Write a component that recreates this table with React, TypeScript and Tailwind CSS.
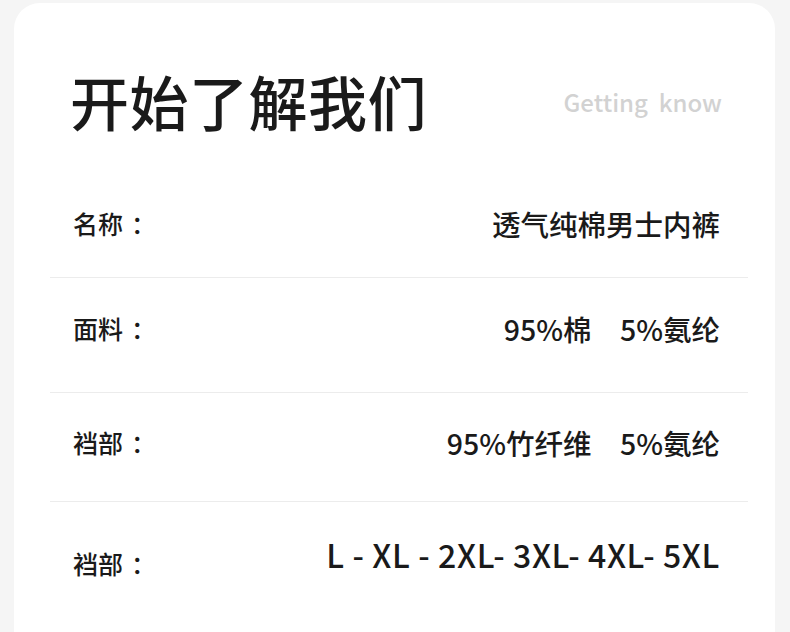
const font = { fontFamily: '"Noto Sans CJK SC", "Noto Sans", sans-serif' };

const rows = [
  { label: "名称", value: "透气纯棉男士内裤", h: "h-[143px]", pt: "pt-[71px]" },
  { label: "面料", value: "95%棉\u30005%氨纶", h: "h-[115px]", pt: "pt-[33px]" },
  { label: "裆部", value: "95%竹纤维\u30005%氨纶", h: "h-[109px]", pt: "pt-[32px]" },
];

function Label({ text }: { text: string }) {
  return (
    <span className="flex items-center text-[25px] font-medium">
      {text}
      <span className="ml-[8px]">：</span>
    </span>
  );
}

export default function App() {
  return (
    <div className="h-[632px] overflow-hidden bg-[#f5f5f5] pt-[3px] pl-[14px]" style={font}>
      <div className="w-[761px] min-h-[700px] rounded-[26px] bg-white pl-[36px] pr-[27px] pt-[62px] text-[#1a1a1a]">
        <div className="flex h-[70px] items-center justify-between pl-[20px] pr-[26px]">
          <h1 className="text-[59px] font-medium leading-none tracking-[0.5px]">开始了解我们</h1>
          <span className="mt-[4px] whitespace-pre text-[24px] font-medium text-[#d2d2d2]">Getting  know</span>
        </div>

        {rows.map((row) => (
          <div key={row.value} className={`${row.h} ${row.pt} border-b border-[#ececec] pl-[23px] pr-[28px]`}>
            <div className="flex h-[36px] items-center justify-between">
              <Label text={row.label} />
              <span className="text-[28.5px] font-medium">{row.value}</span>
            </div>
          </div>
        ))}

        <div className="flex items-start justify-between pl-[23px] pr-[28px] pt-[34px]">
          <div className="mt-[10px] flex h-[36px] items-center">
            <Label text="裆部" />
          </div>
          <span className="flex h-[36px] items-center text-[32px] font-medium tracking-[0.6px]">L - XL - 2XL- 3XL- 4XL- 5XL</span>
        </div>
      </div>
    </div>
  );
}
